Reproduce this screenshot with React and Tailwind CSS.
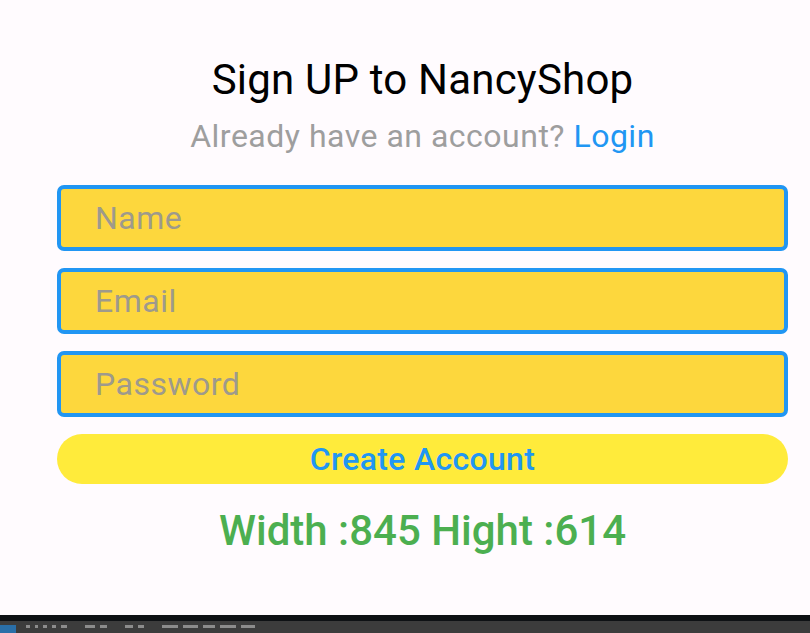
import React from "react";

export default function App() {
  const font = { fontFamily: "Roboto, 'Noto Sans', sans-serif" };
  const marks = [4, 3, 4, 4, 6, 0, 10, 7, 0, 8, 6, 0, 16, 15, 12, 16, 14];
  return (
    <div className="w-[810px] h-[633px] overflow-hidden bg-[#fffbfe] flex flex-col" style={font}>
      <div className="h-[615px] w-[845px] shrink-0 flex flex-col items-center pt-[56px]">
        <h1 className="text-[42px] leading-[48px] text-black font-normal tracking-[0.2px]">Sign UP to NancyShop</h1>
        <p className="mt-[13px] text-[32px] leading-[38px] text-[#9e9e9e] tracking-[0.5px]">
          Already have an account? <span className="text-[#2196f3]">Login</span>
        </p>
        <div className="mt-[30px] w-[731px] flex flex-col gap-[17px]">
          {["Name", "Email", "Password"].map((p) => (
            <div key={p} className="h-[66px] rounded-[7px] border-4 border-[#2196f3] bg-[#fdd73d] flex items-center pl-[34px]">
              <span className="text-[32px] leading-[38px] text-[#9e9a8c] tracking-[0.5px]">{p}</span>
            </div>
          ))}
          <button className="h-[50px] rounded-full bg-[#ffeb3b] text-[#2196f3] text-[32px] leading-[40px] font-medium tracking-[0.3px] flex items-center justify-center">
            Create Account
          </button>
        </div>
        <div className="mt-[22px] text-[42px] leading-[50px] font-medium text-[#4caf50]">Width :845 Hight :614</div>
      </div>
      <div className="h-[6px] bg-[#0e1114] shrink-0" />
      <div className="h-[12px] bg-[#3c3c3c] flex items-start shrink-0 overflow-hidden">
        <div className="w-[16px] h-[12px] bg-[#2a6fa8] mt-[4px]" />
        <div className="ml-[10px] mt-[4px] flex gap-[5px]">
          {marks.map((w, i) => (
            <div key={i} className={w ? "h-[3px] bg-[#8c8c8c]" : "h-[3px]"} style={{ width: (w || 8) + "px" }} />
          ))}
        </div>
      </div>
    </div>
  );
}
